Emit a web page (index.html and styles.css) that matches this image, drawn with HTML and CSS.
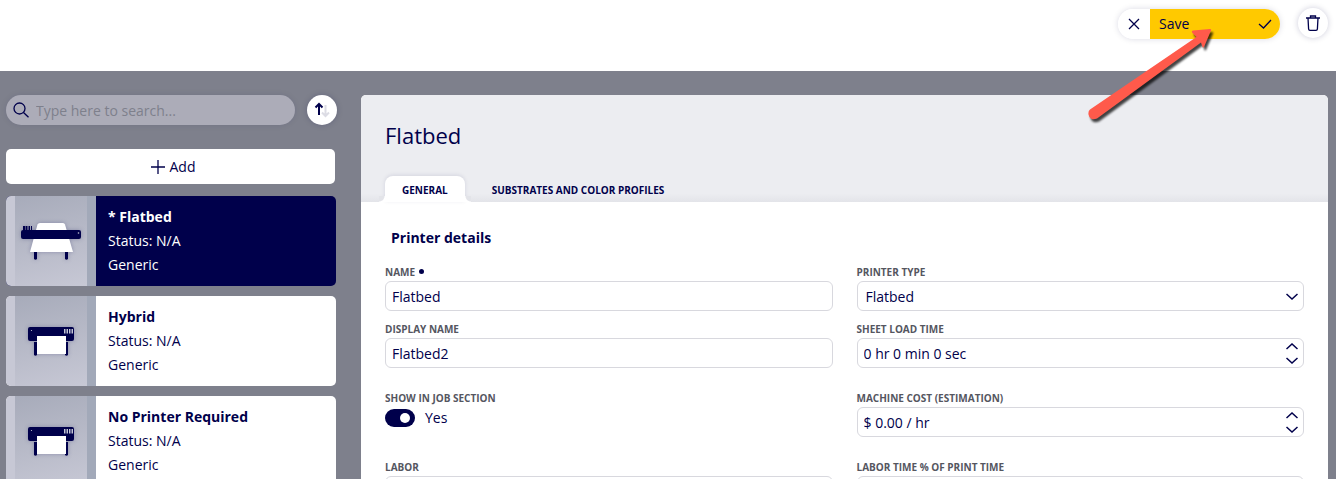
FILE: index.html
```html
<!DOCTYPE html>
<html lang="en">
<head>
<meta charset="utf-8">
<meta name="viewport" content="width=device-width, initial-scale=1">
<title>Printers</title>
<link rel="stylesheet" href="styles.css">
</head>
<body>
<svg class="defs" aria-hidden="true">
  <symbol id="up" viewBox="0 0 12 7"><path d="M.5 6 6 1l5.500 5"/></symbol>
  <symbol id="down" viewBox="0 0 12 7"><path d="M.5 1 6 6l5.500-5"/></symbol>
  <symbol id="roll-printer" viewBox="0 0 72 90">
    <path class="ink" d="M19 46h3v13q-1.500 1.500-3 0zM50 46h3v13q-1.500 1.500-3 0z"/>
    <rect class="ink" x="13" y="31" width="46" height="14" rx="2"/>
    <path class="soft" d="M49 33h1.500v4.500H49zM51.500 33H53v4.500h-1.500zM54 33h1.500v4.500H54zM56.500 33H58v4.500h-1.500z"/>
    <circle class="soft" cx="16.500" cy="34.500" r=".6"/>
    <path class="sheet" d="M22 40h29v18H22z"/>
  </symbol>
  <symbol id="flatbed-printer" viewBox="0 0 72 90">
    <path class="ink" d="M19 55h3v8q-1.500 1.500-3 0zM50 55h3v8q-1.500 1.500-3 0z"/>
    <path class="sheet" d="M25 27h23q1.500 0 2 1.500L58 56H15l7.500-27.500Q23 27 25 27z"/>
    <rect class="ink" x="6" y="34" width="60" height="9" rx="2"/>
    <path class="ink" d="M8 30h2v4H8zM10.500 30h2v4h-2zM13.500 30h1.500v4h-1.500zM16 30h1v4h-1z"/>
    <circle class="soft" cx="63.500" cy="37" r=".8"/>
  </symbol>
</svg>
<div class="app">
  <header class="topbar">
    <div class="save-group">
      <button class="cancel" type="button" aria-label="Cancel"><svg class="icon" width="12" height="12" viewBox="0 0 12 12"><path d="m1 1 10 10M11 1 1 11"/></svg></button>
      <button class="save" type="button">Save<svg class="icon" width="14" height="10" viewBox="0 0 14 10"><path d="m1 5 4.500 4L13 1"/></svg></button>
    </div>
    <button class="round" type="button" aria-label="Delete"><svg class="icon" width="14" height="16" viewBox="0 0 14 16"><path d="M0 3h14M4.500 3V1h5v2M2 3l.6 11q.1 1.300 1.400 1.300h6q1.300 0 1.400-1.300L12 3"/></svg></button>
    <svg class="pointer" width="136" height="100" viewBox="0 0 136 100" aria-hidden="true"><path d="M7 86.500 113.500 14 109 9.500q-.5-1.500 1-2L127 6q1.500 0 1 1.500L121 24q-1 1-1.500 0L118 19.500 14 95.500q-7 2.500-8.500-4Q5 88 7 86.500z"/></svg>
  </header>
  <div class="workspace">
    <aside class="sidebar">
      <div class="search-row">
        <label class="search">
          <svg class="icon" width="16" height="16" viewBox="0 0 16 16"><circle cx="6.500" cy="6.500" r="5.500"/><path d="m10.500 10.500 5 4.800"/></svg>
          <input type="search" placeholder="Type here to search..." aria-label="Search printers">
        </label>
        <button class="round" type="button" aria-label="Sort"><svg class="icon" width="16" height="16" viewBox="0 0 16 16"><path class="strong" d="M5 13V2M1.500 5.500 5 2l3.500 3.500"/><path class="faded" d="M11.500 3v11M8 10.500l3.500 3.500 3.500-3.500"/></svg></button>
      </div>
      <button class="add" type="button"><svg class="icon" width="14" height="14" viewBox="0 0 14 14"><path d="M7 0v14M0 7h14"/></svg>Add</button>
      <ul class="printers">
        <li class="card selected"><div class="thumb"><svg class="printer"><use href="#flatbed-printer"/></svg></div><div class="info"><strong>* Flatbed</strong><span>Status: N/A</span><span>Generic</span></div></li>
        <li class="card"><div class="thumb"><svg class="printer"><use href="#roll-printer"/></svg></div><div class="info"><strong>Hybrid</strong><span>Status: N/A</span><span>Generic</span></div></li>
        <li class="card"><div class="thumb"><svg class="printer"><use href="#roll-printer"/></svg></div><div class="info"><strong>No Printer Required</strong><span>Status: N/A</span><span>Generic</span></div></li>
      </ul>
    </aside>
    <main class="panel">
      <div class="panel-head">
        <h1>Flatbed</h1>
        <div class="tabs" role="tablist">
          <button class="tab active" type="button" role="tab" aria-selected="true">GENERAL</button>
          <button class="tab" type="button" role="tab" aria-selected="false">SUBSTRATES AND COLOR PROFILES</button>
        </div>
      </div>
      <form class="details">
        <h2>Printer details</h2>
        <div class="fields">
          <div class="field"><label class="required" for="name">NAME</label><input class="box" id="name" type="text" value="Flatbed"></div>
          <div class="field"><label for="type">PRINTER TYPE</label><div class="control"><select class="box" id="type"><option>Flatbed</option></select><span class="arrows"><svg class="icon chevron"><use href="#down"/></svg></span></div></div>
          <div class="field"><label for="display">DISPLAY NAME</label><input class="box" id="display" type="text" value="Flatbed2"></div>
          <div class="field"><label for="load">SHEET LOAD TIME</label><div class="control"><input class="box" id="load" type="text" value="0 hr 0 min 0 sec"><span class="arrows"><button type="button" aria-label="Increase"><svg class="icon chevron"><use href="#up"/></svg></button><button type="button" aria-label="Decrease"><svg class="icon chevron"><use href="#down"/></svg></button></span></div></div>
          <div class="field spaced"><label for="show">SHOW IN JOB SECTION</label><div class="toggle"><input class="switch" id="show" type="checkbox" role="switch" checked><span>Yes</span></div></div>
          <div class="field spaced"><label for="cost">MACHINE COST (ESTIMATION)</label><div class="control"><input class="box" id="cost" type="text" value="$ 0.00 / hr"><span class="arrows"><button type="button" aria-label="Increase"><svg class="icon chevron"><use href="#up"/></svg></button><button type="button" aria-label="Decrease"><svg class="icon chevron"><use href="#down"/></svg></button></span></div></div>
          <div class="field spaced"><label for="labor">LABOR</label><input class="box" id="labor" type="text"></div>
          <div class="field spaced"><label for="labor-time">LABOR TIME % OF PRINT TIME</label><input class="box" id="labor-time" type="text"></div>
        </div>
      </form>
    </main>
  </div>
</div>
</body>
</html>
```
FILE: styles.css
```css
* { box-sizing: border-box; }

:root {
  --navy: #00004b;
  --gray: #7e808c;
  --line: #d8d8de;
}

body {
  margin: 0;
  color: var(--navy);
  font: 14px/24px "Open Sans", "Noto Sans", sans-serif;
}

button, input, select { font: inherit; color: inherit; }
button { border: 0; padding: 0; cursor: pointer; }

.defs { position: absolute; width: 0; height: 0; }
.icon { flex: none; fill: none; stroke: var(--navy); stroke-width: 1.3; }
.ink { fill: var(--navy); }
.soft { fill: #c4c6d6; }
.sheet { fill: #fff; }

.app {
  display: flex;
  flex-direction: column;
  height: 100vh;
  overflow: hidden;
}

.topbar {
  position: relative;
  flex: none;
  display: flex;
  justify-content: flex-end;
  align-items: flex-start;
  gap: 18px;
  height: 71px;
  padding: 8px 8px 0;
  background: #fff;
}

.save-group {
  display: flex;
  margin-top: 1px;
  border-radius: 15px;
  box-shadow: 0 0 6px #00004b26;
}

.cancel, .save, .round {
  display: flex;
  align-items: center;
  justify-content: center;
  height: 30px;
}

.cancel { width: 32px; border-radius: 15px 0 0 15px; background: #fff; }

.save {
  justify-content: space-between;
  width: 130px;
  padding: 0 8px 0 9px;
  border-radius: 0 15px 15px 0;
  background: #ffc900;
}

.round {
  flex: none;
  width: 30px;
  border-radius: 50%;
  background: #fff;
  box-shadow: 0 0 6px #00004b33;
}

.pointer {
  position: absolute;
  top: 23px;
  right: 117px;
  z-index: 2;
  overflow: visible;
  fill: #ff5a4b;
  filter: drop-shadow(2px 3px 1px #000b);
  pointer-events: none;
}

.workspace {
  flex: 1;
  display: flex;
  gap: 24px;
  min-height: 0;
  padding: 24px 8px 0 6px;
  background: var(--gray);
}

.sidebar { flex: none; width: 331px; }
.search-row { display: flex; gap: 12px; }

.search {
  flex: 1;
  display: flex;
  align-items: center;
  gap: 7px;
  height: 30px;
  padding: 0 8px 0 7px;
  border-radius: 15px;
  background: #acacb8;
  box-shadow: 0 0 6px #00004b1a;
}

.search input {
  flex: 1;
  min-width: 0;
  height: 30px;
  padding: 1px 0 0;
  border: 0;
  outline: 0;
  background: none;
}

.search input::placeholder { color: #7e808c; opacity: 1; }
.strong { stroke-width: 2; }
.faded { stroke: #dcdce4; stroke-width: 2; }

.add {
  display: flex;
  align-items: center;
  justify-content: center;
  gap: 5px;
  width: 329px;
  height: 35px;
  margin: 24px 0 12px;
  padding-left: 5px;
  border-radius: 5px;
  background: #fff;
  font-weight: 500;
}

.printers {
  display: grid;
  gap: 10px;
  width: 330px;
  margin: 0;
  padding: 0;
  list-style: none;
}

.card {
  display: flex;
  height: 90px;
  overflow: hidden;
  border-radius: 5px;
  background: #fff;
}

.card.selected { background: var(--navy); color: #fff; }

.thumb {
  flex: none;
  width: 90px;
  border: solid #c7c8d5;
  border-width: 0 9px;
  border-right-color: #a2a9b9;
  background: linear-gradient(165deg, #a7abba, #c7c8d5);
}

.printer {
  display: block;
  width: 72px;
  height: 90px;
  filter: drop-shadow(0 0 2px #00004b40);
}

.info { display: flex; flex-direction: column; padding: 9px 12px; }

.panel {
  flex: 1;
  min-width: 0;
  overflow: hidden;
  border-radius: 5px 5px 0 0;
  background: #fff;
}

.panel-head {
  padding: 24px 24px 0;
  background: linear-gradient(#ecedf1 92%, #e3e4e9);
}

h1 { margin: 0 0 24px; font-size: 22px; font-weight: 400; line-height: 33px; }
.tabs { display: flex; gap: 10px; }

.tab {
  height: 26px;
  padding: 2px 17px 0;
  background: none;
  font-size: 10px;
  font-weight: 700;
  line-height: 24px;
}

.tab.active {
  position: relative;
  border-radius: 8px 8px 0 0;
  background: #fff;
  box-shadow: 0 -1px 4px #00004b1a;
}

.tab.active::before, .tab.active::after {
  content: "";
  position: absolute;
  bottom: 0;
  width: 6px;
  height: 6px;
}

.tab.active::before { right: 100%; background: radial-gradient(circle at 0 0, #e3e4e9 5px, #fff 6px); }
.tab.active::after { left: 100%; background: radial-gradient(circle at 100% 0, #e3e4e9 5px, #fff 6px); }

.details { padding: 24px 24px 0; }
h2 { margin: 0 0 14px; padding: 0 6px; font-size: 14px; line-height: 24px; }

.fields {
  display: grid;
  grid-template-columns: 1fr 1fr;
  gap: 10px 24px;
}

.field.spaced { margin-top: 12px; }

.field label {
  display: flex;
  align-items: center;
  gap: 4px;
  height: 15px;
  margin-bottom: 2px;
  color: #55565f;
  font-size: 10px;
  font-weight: 700;
}

.required::after {
  content: "";
  width: 5px;
  height: 5px;
  border-radius: 50%;
  background: var(--navy);
}

.box {
  display: block;
  width: 100%;
  height: 30px;
  padding: 0 6px;
  border: 1px solid var(--line);
  border-radius: 6px;
  background: #fff;
}

select.box { padding: 1px 6px 0 8px; appearance: none; }
.control { position: relative; }

.arrows {
  position: absolute;
  inset: 0 6px 0 auto;
  display: flex;
  flex-direction: column;
  justify-content: center;
  gap: 7px;
  pointer-events: none;
}

.arrows button { display: block; height: 7px; background: none; pointer-events: auto; }
.chevron { display: block; width: 12px; height: 7px; stroke-width: 1.5; }
.toggle { display: flex; align-items: center; gap: 10px; height: 22px; }

.switch {
  display: flex;
  align-items: center;
  justify-content: flex-end;
  width: 30px;
  height: 18px;
  margin: 0;
  padding: 0 5px;
  appearance: none;
  border-radius: 9px;
  background: var(--navy);
}

.switch::before {
  content: "";
  width: 10px;
  height: 10px;
  border-radius: 50%;
  background: #fff;
}

.switch:not(:checked) { justify-content: flex-start; background: var(--gray); }
```
